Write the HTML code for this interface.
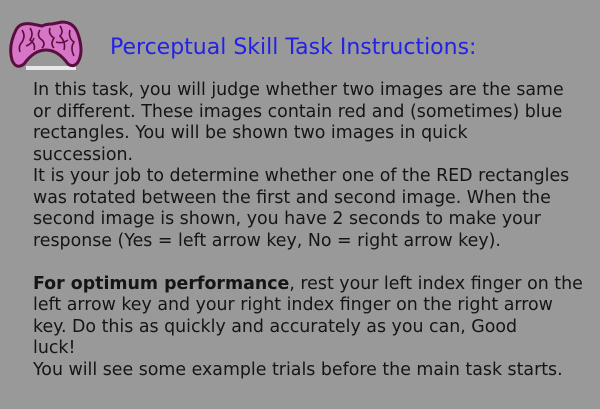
<!DOCTYPE html>
<html><head><style>
html,body{margin:0;padding:0;}
body{width:600px;height:409px;background:#999999;position:relative;overflow:hidden;font-family:"DejaVu Sans","Liberation Sans",sans-serif;}
.t{position:absolute;left:110px;top:35px;font-size:22px;color:#2222e6;white-space:nowrap;}
.b{position:absolute;left:33px;top:80px;font-size:17.4px;line-height:21.5px;color:#151515;}
.b div{white-space:nowrap;height:21.5px;}
</style></head><body>
<svg style="position:absolute;left:6px;top:16px" width="78" height="58" viewBox="0 0 78 58">
<rect x="20" y="50" width="50" height="4" fill="#e8e8e8"/>
<path d="M10 14 Q14 6 26 8 L36 10 Q40 8 46 8 L56 6 Q68 6 72 18 Q78 36 72 46 Q68 52 62 48 Q52 34 40 34 Q28 34 18 48 Q10 54 6 44 Q2 30 10 14 Z" fill="#d776c6" stroke="#5a0e40" stroke-width="3"/>
<g fill="none" stroke="#5a0e40" stroke-width="1.6">
<path d="M16 14 Q20 20 16 26 Q12 30 14 36"/>
<path d="M24 12 Q28 18 24 24 Q30 28 28 34"/>
<path d="M34 14 Q30 20 36 24 Q40 28 36 32"/>
<path d="M44 12 Q42 18 48 22 Q44 28 48 32"/>
<path d="M54 10 Q58 16 54 20 Q60 26 58 34"/>
<path d="M64 14 Q62 22 68 26 Q64 32 68 40"/>
<path d="M20 30 Q26 28 28 22"/>
<path d="M50 26 Q56 28 62 24"/>
</g>
</svg>
<div class="t">Perceptual Skill Task Instructions:</div>
<div class="b">
<div>In this task, you will judge whether two images are the same</div>
<div>or different. These images contain red and (sometimes) blue</div>
<div>rectangles. You will be shown two images in quick</div>
<div>succession.</div>
<div>It is your job to determine whether one of the RED rectangles</div>
<div>was rotated between the first and second image. When the</div>
<div>second image is shown, you have 2 seconds to make your</div>
<div>response (Yes = left arrow key, No = right arrow key).</div>
<div></div>
<div><b>For optimum performance</b>, rest your left index finger on the</div>
<div>left arrow key and your right index finger on the right arrow</div>
<div>key. Do this as quickly and accurately as you can, Good</div>
<div>luck!</div>
<div>You will see some example trials before the main task starts.</div>
</div>
</body></html>
